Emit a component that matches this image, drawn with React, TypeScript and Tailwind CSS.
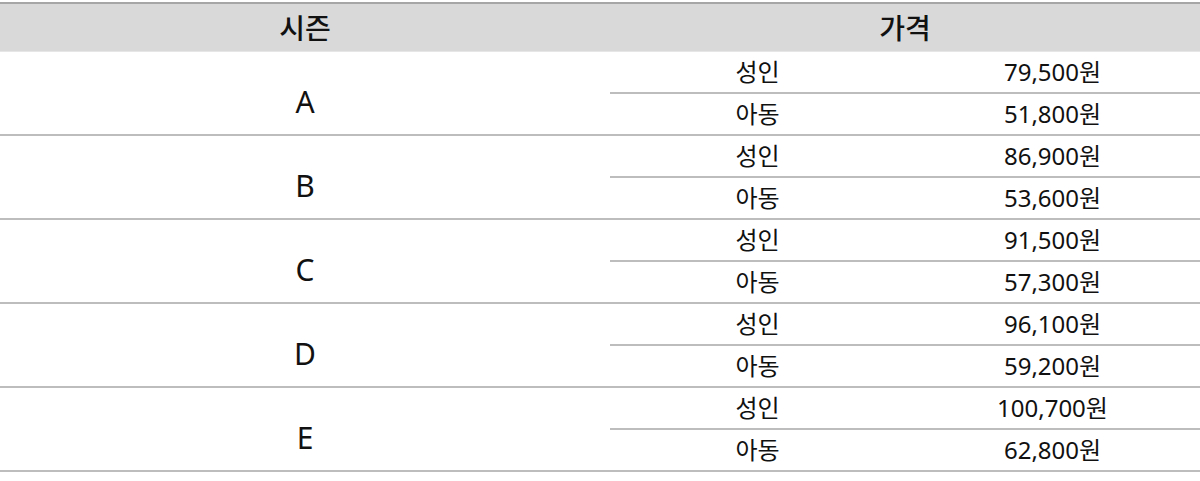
const seasons = [
  { name: "A", adult: "79,500원", child: "51,800원" },
  { name: "B", adult: "86,900원", child: "53,600원" },
  { name: "C", adult: "91,500원", child: "57,300원" },
  { name: "D", adult: "96,100원", child: "59,200원" },
  { name: "E", adult: "100,700원", child: "62,800원" },
];

export default function App() {
  return (
    <div
      className="w-[1200px] h-[481px] bg-white pt-[2px] text-[#111]"
      style={{ fontFamily: '"Noto Sans", "Noto Sans CJK KR", sans-serif' }}
    >
      {/* header */}
      <div className="flex h-[50px] bg-[#d9d9d9] border-t-2 border-b border-[#a6a6a6] border-b-[#e6e6e6]">
        <div className="w-[610px] flex items-center justify-center text-[28px] font-medium">시즌</div>
        <div className="flex-1 flex items-center justify-center text-[28px] font-medium">가격</div>
      </div>

      {seasons.map((s) => (
        <div key={s.name} className="flex h-[84px] border-b-2 border-[#bdbdbd]">
          <div className="w-[610px] flex items-center justify-center text-[30px] pt-[16px]">{s.name}</div>
          <div className="flex-1 flex flex-col">
            <div className="h-[42px] flex items-center border-b-2 border-[#bdbdbd] text-[24px]">
              <div className="w-[295px] text-center">성인</div>
              <div className="flex-1 text-center">{s.adult}</div>
            </div>
            <div className="flex-1 flex items-center text-[24px]">
              <div className="w-[295px] text-center">아동</div>
              <div className="flex-1 text-center">{s.child}</div>
            </div>
          </div>
        </div>
      ))}
    </div>
  );
}
